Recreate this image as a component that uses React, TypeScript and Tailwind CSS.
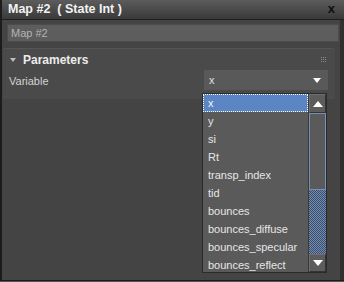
const ITEMS = [
  "x",
  "y",
  "si",
  "Rt",
  "transp_index",
  "tid",
  "bounces",
  "bounces_diffuse",
  "bounces_specular",
  "bounces_reflect",
];

function Grip() {
  return (
    <div className="grid grid-cols-3 gap-[1px]">
      {Array.from({ length: 9 }).map((_, i) => (
        <div key={i} className="size-[1px] bg-[#8a8a8a]" />
      ))}
    </div>
  );
}

function DropList() {
  return (
    <div className="absolute left-[202px] top-[93px] flex h-[180px] w-[125px] border border-[#2a2a2a] bg-[#5a5a5a]">
      {/* items */}
      <div className="flex-1 overflow-hidden">
        {ITEMS.map((item, i) => (
          <div
            key={item}
            className={
              i === 0
                ? "flex h-[18px] items-center border border-dotted border-white bg-[#5b86c3] px-[4px] text-[#f4f4f4]"
                : "flex h-[18px] items-center px-[5px] text-[#e6e6e6]"
            }
          >
            {item}
          </div>
        ))}
      </div>

      {/* scrollbar */}
      <div className="flex w-[18px] flex-col border-l border-[#3a3a3a]">
        <div className="flex h-[19px] items-center justify-center border border-[#6e6e6e] border-b-[#333] border-r-[#333] bg-[#5c5c5c]">
          <div className="h-0 w-0 border-x-[5px] border-b-[6px] border-x-transparent border-b-white" />
        </div>
        <div className="h-[77px] border border-[#7890b4] bg-[#5a5a5a]" />
        <div className="flex-1 bg-[repeating-conic-gradient(#34507a_0%_25%,#7a8aa2_0%_50%)] bg-[length:2px_2px]" />
        <div className="flex h-[18px] items-center justify-center border border-[#6e6e6e] border-b-[#333] border-r-[#333] bg-[#5c5c5c]">
          <div className="h-0 w-0 border-x-[5px] border-t-[6px] border-x-transparent border-t-white" />
        </div>
      </div>
    </div>
  );
}

export default function App() {
  return (
    <div className="relative flex h-[282px] w-[344px] flex-col overflow-hidden bg-[#555] font-['Liberation_Sans',Arial,sans-serif] text-[11px]">
      <div className="flex h-[281px] flex-col border-b border-l-2 border-[#1c1c1c] bg-[#444]">
        {/* title bar */}
        <div className="flex h-[20px] shrink-0 items-center justify-between border-b border-[#1e1e1e] bg-gradient-to-b from-[#5c5c5c] to-[#3a3a3a] pl-[6px] pr-[9px]">
          <span className="text-[12.5px] font-bold whitespace-pre text-[#f2f2f2]">
            Map #2  ( State Int )
          </span>
          <span className="-mt-[2px] text-[13px] leading-none font-black text-[#0e0e0e]">
            x
          </span>
        </div>

        <div className="flex flex-1">
          <div className="flex flex-1 flex-col">
            {/* name field */}
            <div className="mt-[4px] ml-[5px] mr-[1px] flex h-[18px] items-center border border-[#4c4c4c] bg-[#5d5d5d] px-[3px] text-[#b4b4b4]">
              Map #2
            </div>

            {/* parameters rollout */}
            <div className="mt-[6px] ml-[1px] mr-[5px] flex h-[51px] flex-col rounded-t-[3px] border-t border-[#555] bg-[#4a4a4a]">
              <div className="flex h-[21px] items-center pl-[7px] pr-[9px]">
                <div className="mr-[7px] h-0 w-0 border-x-[3px] border-t-[4px] border-x-transparent border-t-[#bdbdbd]" />
                <span className="text-[12px] font-bold text-[#ececec]">
                  Parameters
                </span>
                <div className="ml-auto">
                  <Grip />
                </div>
              </div>
              <div className="flex items-start pl-[6px] pr-[7px]">
                <span className="pt-[3px] text-[#d2d2d2]">Variable</span>
                <div className="ml-auto flex h-[20px] w-[124px] items-center justify-between bg-[#595959] pl-[5px] pr-[7px] text-[#e0e0e0]">
                  <span>x</span>
                  <div className="h-0 w-0 border-x-[4px] border-t-[5px] border-x-transparent border-t-white" />
                </div>
              </div>
            </div>
          </div>

          {/* right strip */}
          <div className="w-[4px] bg-[#303030]" />
        </div>
      </div>

      <DropList />
    </div>
  );
}
